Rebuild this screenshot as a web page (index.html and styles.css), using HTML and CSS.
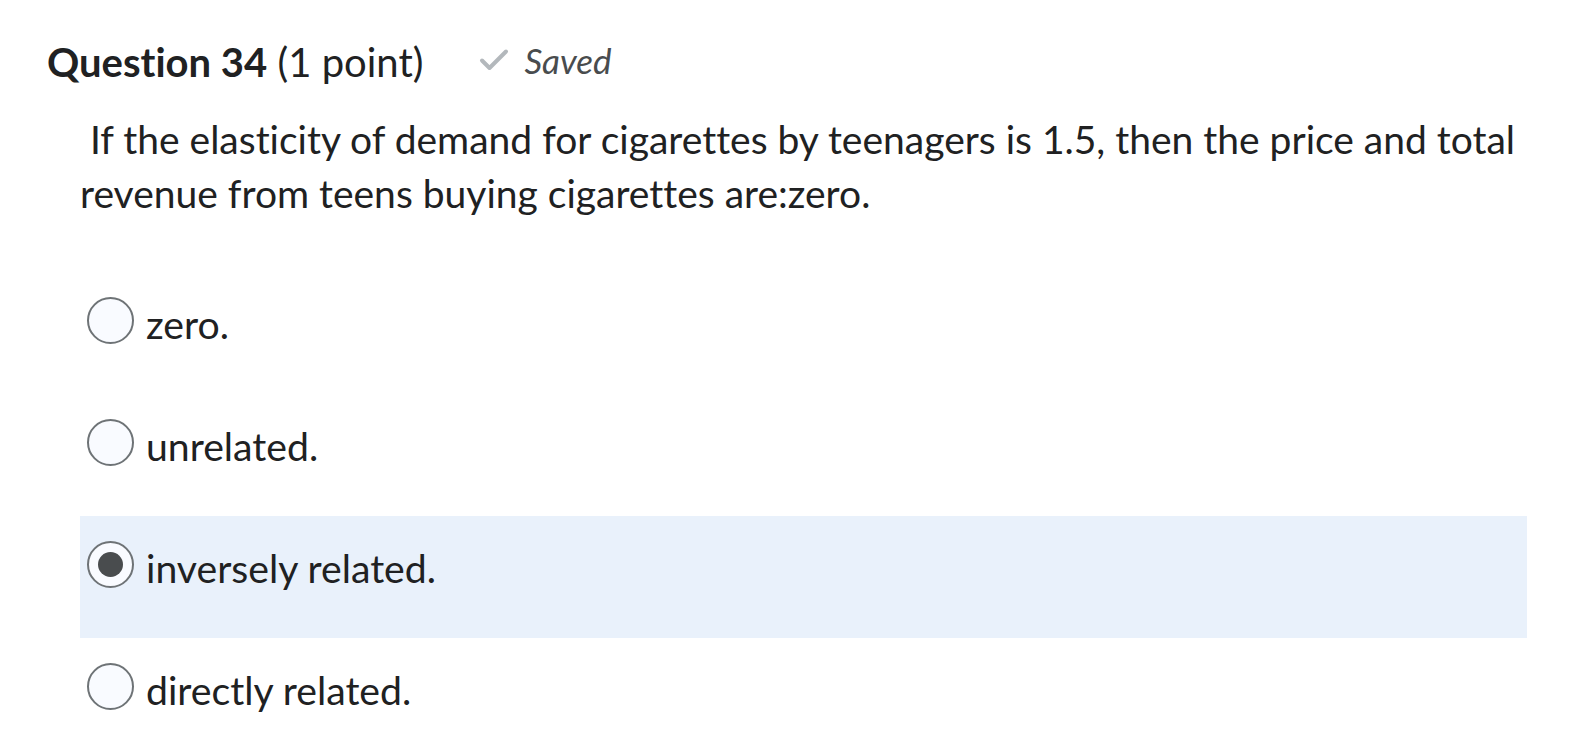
FILE: index.html
```html
<!DOCTYPE html>
<html>
<head>
<meta charset="utf-8">
<link rel="stylesheet" href="styles.css">
</head>
<body>
<div class="page">
  <div class="header">
    <h2 class="title"><strong>Question 34</strong> <span class="pts">(1 point)</span></h2>
    <div class="saved">
      <svg class="check" width="30" height="24" viewBox="0 0 30 24"><path d="M3 12.5 L10.5 20 L27 3.5" fill="none" stroke="#b3b8bc" stroke-width="4" stroke-linecap="round" stroke-linejoin="round"/></svg>
      <span>Saved</span>
    </div>
  </div>
  <div class="question">
    <p>&nbsp;If the elasticity of demand for cigarettes by teenagers is 1.5, then the price and total revenue from teens buying cigarettes are:zero.</p>
  </div>
  <div class="options">
    <label class="opt"><span class="radio"></span><span class="txt">zero.</span></label>
    <label class="opt"><span class="radio"></span><span class="txt">unrelated.</span></label>
    <label class="opt sel"><span class="radio on"></span><span class="txt">inversely related.</span></label>
    <label class="opt"><span class="radio"></span><span class="txt">directly related.</span></label>
  </div>
</div>
</body>
</html>
```

FILE: styles.css
```css
html, body { margin: 0; padding: 0; background: #fff; }
body { font-family: Lato, "Liberation Sans", sans-serif; color: #202122; font-variant-ligatures: none; font-feature-settings: "liga" 0, "clig" 0; }
.page { padding: 37px 67px 0 47px; }
.header { display: flex; align-items: center; gap: 56px; height: 50px; }
.title { margin: 0; font-size: 40px; font-weight: 400; color: #202122; white-space: nowrap; }
.title strong { font-weight: 700; }
.saved { display: flex; align-items: center; gap: 15px; color: #494c4e; font-style: italic; font-size: 35px; margin-top: -4px; }
.check { display: block; }
.question { padding: 25px 0 0 33px; }
.question p { margin: 0; font-size: 39px; line-height: 54px; width: 1440px; }
.options { margin: 52px 0 0 33px; display: flex; flex-direction: column; }
.opt { display: flex; align-items: flex-start; height: 122px; padding: 24px 0 0 7px; box-sizing: border-box; }
.opt.sel { background: #e9f1fb; }
.radio { width: 47px; height: 47px; margin-top: 1px; border: 2px solid #6e7376; border-radius: 50%; background: #f9fbff; box-sizing: border-box; flex: none; display: flex; align-items: center; justify-content: center; }
.radio.on::after { content: ""; width: 25px; height: 25px; border-radius: 50%; background: #494c4e; }
.txt { font-size: 39.2px; margin-left: 12px; line-height: 50px; margin-top: 3px; color: #202122; }
```
